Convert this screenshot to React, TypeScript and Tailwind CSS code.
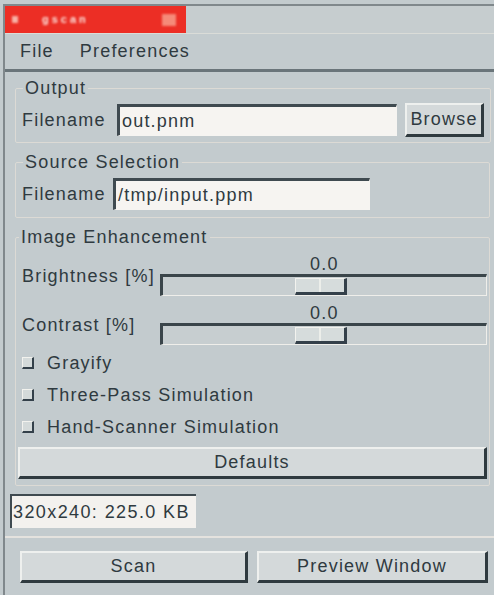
import React from 'react';

const font = { fontFamily: '"Liberation Sans", Arial, sans-serif' };

const Frame: React.FC<{ title: string; className?: string; children: React.ReactNode }> = ({ title, className = '', children }) => (
    <fieldset className={`border border-[#dcdad5] rounded-[2px] px-[6px] ${className}`}>
        <legend className="px-[2px] ml-[1px] leading-[16px]">{title}</legend>
        {children}
    </fieldset>
);

const Entry: React.FC<{ value: string; className?: string }> = ({ value, className = '' }) => (
    <div className={`h-[32px] bg-[#f6f4f1] border-t-[3px] border-l-[3px] border-[#3f4a50] border-r border-b border-r-[#f6f4f1] border-b-[#f6f4f1] flex items-center px-[2px] ${className}`}>
        {value}
    </div>
);

const Button: React.FC<{ label: string; className?: string }> = ({ label, className = '' }) => (
    <div className={`bg-[#d4d9da] border-t-2 border-l-2 border-[#eef0ee] border-r-[3px] border-b-[3px] border-r-[#2f3a3f] border-b-[#2f3a3f] flex items-center justify-center ${className}`}>
        {label}
    </div>
);

const Scale: React.FC<{ label: string; value: string }> = ({ label, value }) => (
    <div className="flex">
        <div className="w-[138px] pt-[13px] leading-[18px] shrink-0">{label}</div>
        <div className="flex-1 flex flex-col">
            <div className="h-[20px] leading-[20px] pl-[150px]">{value}</div>
            <div className="h-[22px] bg-[#c7ced0] border-t-[3px] border-l-[3px] border-[#3a454a] border-r border-b border-r-[#efeeea] border-b-[#efeeea] pl-[132px] pt-[1px]">
                <div className="w-[52px] h-[17px] bg-[#d6dcdc] border-t border-l border-[#f2f2ee] border-r-[3px] border-b-[3px] border-r-[#34404a] border-b-[#34404a] flex justify-center">
                    <div className="w-[2px] h-full bg-[#eceeea]" />
                </div>
            </div>
        </div>
    </div>
);

const Check: React.FC<{ label: string }> = ({ label }) => (
    <div className="h-[32px] flex items-center gap-[13px]">
        <div className="w-[12px] h-[12px] bg-[#d4dada] border-t border-l border-[#f2f2ee] border-r-2 border-b-2 border-r-[#33404a] border-b-[#33404a]" />
        <span>{label}</span>
    </div>
);

export default function App() {
    return (
        <div style={font} className="w-[494px] h-[595px] overflow-hidden bg-[#c3cbce] text-[#2f3a40] text-[18px] tracking-[1.2px] pl-[3px] pt-[4px]">
            <div className="h-full border-l-2 border-t-2 border-[#80888c]">
                {/* title bar */}
                <div className="h-[27px] flex bg-[#c6cdcf]">
                    <div className="w-[181px] bg-[#ec2e25] flex items-center">
                        <div className="ml-[7px] w-[6px] h-[7px] bg-[#f7b2a6] blur-[1px]" />
                        <span className="ml-[24px] text-[11px] font-bold text-[#fbe5df] blur-[1px] tracking-[3px]">gscan</span>
                        <div className="ml-auto mr-[10px] w-[14px] h-[12px] bg-[#f58a78] blur-[1px]" />
                    </div>
                </div>
                {/* menu bar */}
                <div className="h-[39px] flex items-center border-t border-[#dadcd8] border-b-[3px] border-b-[#6a757a]">
                    <span className="ml-[15px]">File</span>
                    <span className="ml-[26px]">Preferences</span>
                </div>

                <div className="pl-[10px] pr-[4px] pt-[8px]">
                    <Frame title="Output" className="pb-[5px]">
                        <div className="flex items-center mt-[7px] h-[34px]">
                            <span className="w-[95px]">Filename</span>
                            <Entry value="out.pnm" className="w-[280px]" />
                            <Button label="Browse" className="ml-[8px] w-[79px] h-[34px]" />
                        </div>
                    </Frame>
                    <Frame title="Source Selection" className="mt-[11px] pb-[7px]">
                        <div className="flex items-center mt-[8px]">
                            <span className="w-[91px]">Filename</span>
                            <Entry value="/tmp/input.ppm" className="w-[257px]" />
                        </div>
                    </Frame>
                    <Frame title="Image Enhancement" className="mt-[11px] pb-[6px] pl-[2px] pr-[2px]">
                        <div className="pl-[4px] pt-[9px]">
                            <Scale label="Brightness [%]" value="0.0" />
                            <div className="mt-[7px]">
                                <Scale label="Contrast [%]" value="0.0" />
                            </div>
                            <div className="mt-[2px]">
                                <Check label="Grayify" />
                                <Check label="Three-Pass Simulation" />
                                <Check label="Hand-Scanner Simulation" />
                            </div>
                        </div>
                        <Button label="Defaults" className="h-[32px] mt-[4px]" />
                    </Frame>
                </div>

                {/* status */}
                <div className="ml-[5px] mt-[8px] w-[186px] h-[34px] bg-[#f3f1ee] border-t-2 border-l-2 border-[#3f4a50] flex items-center pl-[1px] tracking-[1.4px]">
                    320x240: 225.0 KB
                </div>
                <div className="mt-[8px] h-[2px] bg-[#e4e2de]" />
                <div className="flex gap-[9px] pl-[15px] pr-[6px] mt-[13px]">
                    <Button label="Scan" className="w-[228px] h-[32px]" />
                    <Button label="Preview Window" className="flex-1 h-[32px]" />
                </div>
            </div>
        </div>
    );
}
